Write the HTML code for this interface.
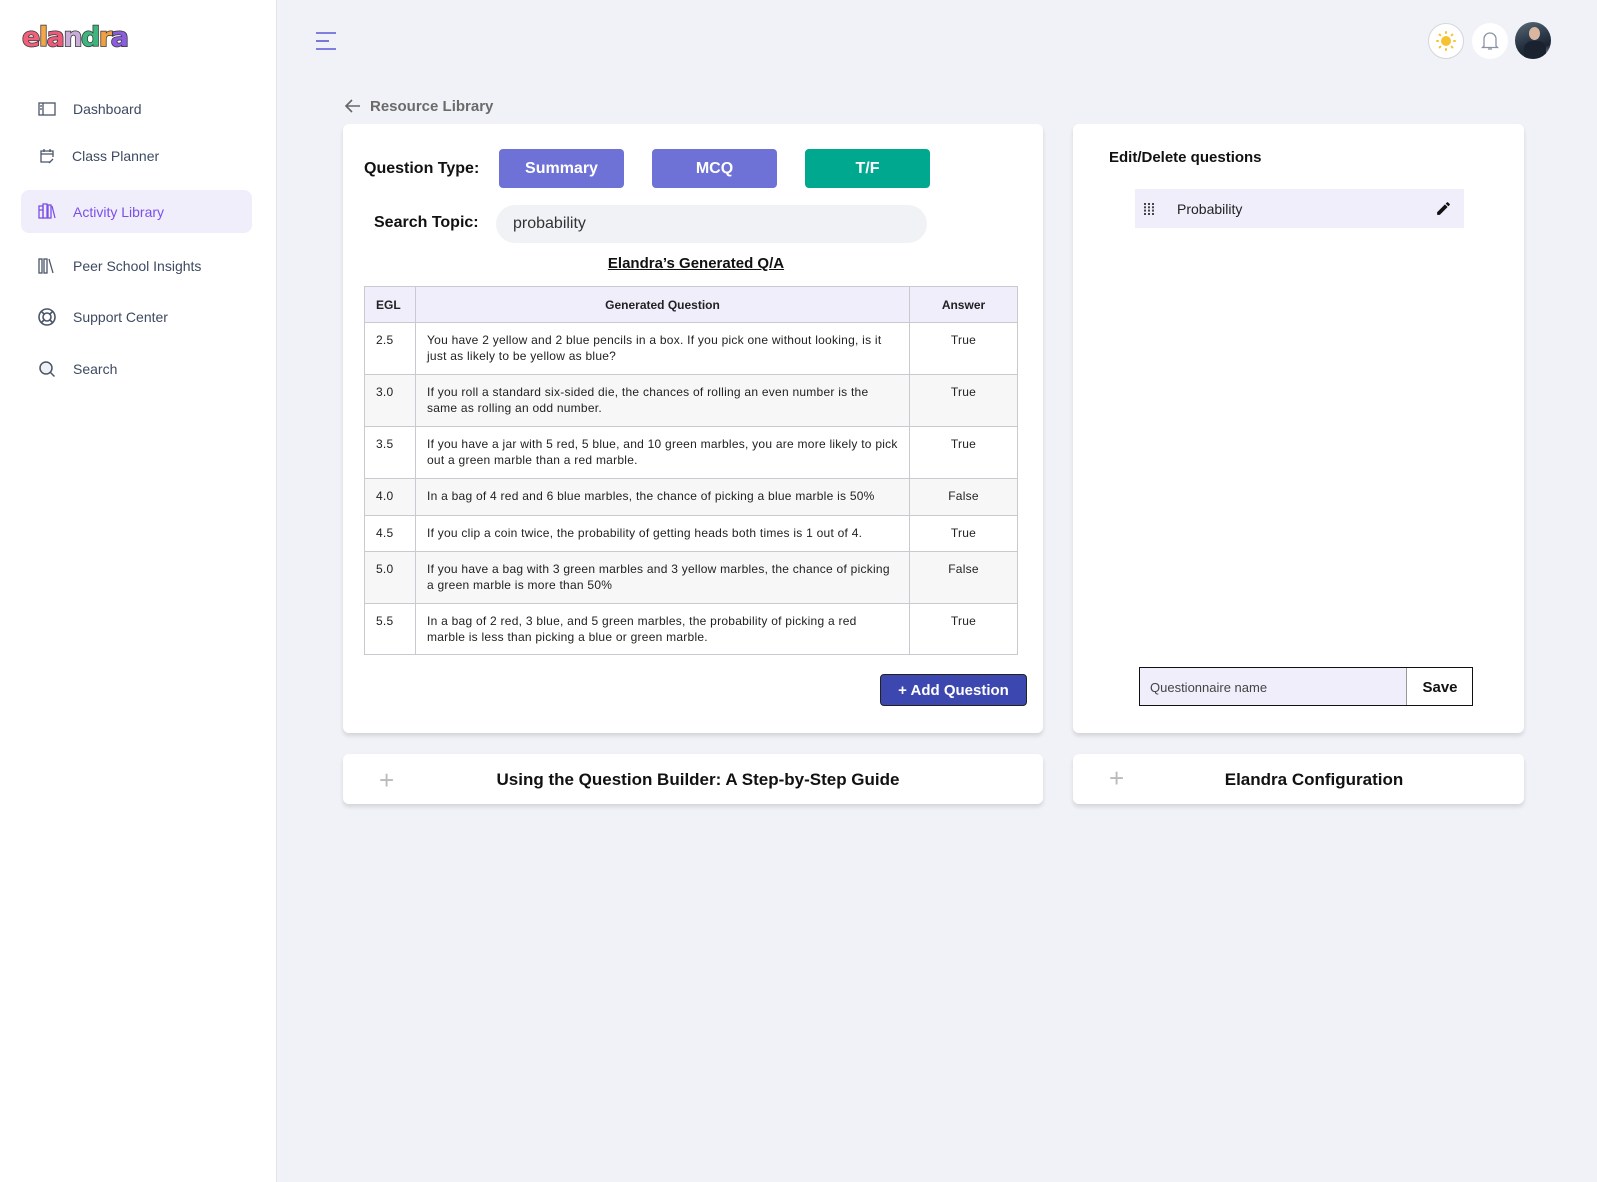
<!DOCTYPE html>
<html><head><meta charset="utf-8"><style>
*{box-sizing:border-box;margin:0;padding:0}
body{width:1597px;height:1182px;background:#f0f2f7;font-family:"Liberation Sans",sans-serif;position:relative;overflow:hidden;color:#111}
.a{position:absolute}
.side{left:0;top:0;width:277px;height:1182px;background:#fff;border-right:1px solid #e3e5ea}
.logo{left:22px;top:22px;font-size:27px;font-weight:bold;font-family:"DejaVu Sans","Liberation Sans",sans-serif;letter-spacing:-1.5px;paint-order:stroke fill;-webkit-text-stroke:1.5px #333}
.nav{left:73px;font-size:14px;color:#3d4a60;line-height:16px}
.ic{left:37px;width:20px;height:20px}
.card{background:#fff;border-radius:6px;box-shadow:0 3px 4px rgba(0,0,0,.12)}
.btn{height:39px;border-radius:4px;color:#fff;font-weight:bold;font-size:16px;display:flex;align-items:center;justify-content:center}
table{border-collapse:collapse;font-size:12px;color:#222;letter-spacing:.25px}
td,th{border:1px solid #c9c9cf;vertical-align:top;padding:9px 11px;line-height:16px}
th{background:#f1eefc;font-weight:bold;vertical-align:middle;padding:0 11px;letter-spacing:0}
tr.g td{background:#f7f7f8}
.c{text-align:center}
</style></head><body>
<div class="a side"></div>
<div class="a logo"><span style="color:#f0607a">e</span><span style="color:#f3a64a">l</span><span style="color:#ec5a7a">a</span><span style="color:#c9acd8">n</span><span style="color:#3fb47e">d</span><span style="color:#f0a040">r</span><span style="color:#8a5ce0">a</span></div>

<svg class="a ic" style="top:99px" viewBox="0 0 20 20" fill="none" stroke="#4a5568" stroke-width="1.3"><rect x="2" y="4" width="16" height="12"/><line x1="6" y1="4" x2="6" y2="16"/><line x1="3" y1="7" x2="5" y2="7"/><line x1="3" y1="10" x2="5" y2="10"/></svg>
<div class="a nav" style="top:101px">Dashboard</div>
<svg class="a ic" style="top:146px" viewBox="0 0 20 20" fill="none" stroke="#4a5568" stroke-width="1.3"><path d="M13 16H4V5h12v6M4 8h12M7 3v3M13 3v3M12 17l4-4"/></svg>
<div class="a nav" style="top:148px;left:72px">Class Planner</div>
<div class="a" style="left:21px;top:190px;width:231px;height:43px;background:#f1eefc;border-radius:8px"></div>
<svg class="a ic" style="top:202px" viewBox="0 0 20 20" fill="none" stroke="#7b4fe8" stroke-width="1.3"><rect x="2" y="4" width="4" height="12"/><rect x="6" y="2" width="4" height="14"/><rect x="11" y="3" width="3" height="13"/><path d="M15 4l3 12"/><line x1="2" y1="8" x2="6" y2="8"/></svg>
<div class="a nav" style="top:204px;color:#7b4fe8">Activity Library</div>
<svg class="a ic" style="top:256px" viewBox="0 0 20 20" fill="none" stroke="#4a5568" stroke-width="1.3"><rect x="2" y="3" width="3" height="14"/><rect x="7" y="3" width="3" height="14"/><path d="M12 3l4 14"/></svg>
<div class="a nav" style="top:258px">Peer School Insights</div>
<svg class="a ic" style="top:307px" viewBox="0 0 20 20" fill="none" stroke="#4a5568" stroke-width="1.6"><circle cx="10" cy="10" r="8"/><circle cx="10" cy="10" r="4"/><path d="M4 4l3 3M16 4l-3 3M4 16l3-3M16 16l-3-3"/></svg>
<div class="a nav" style="top:309px">Support Center</div>
<svg class="a ic" style="top:359px" viewBox="0 0 20 20" fill="none" stroke="#4a5568" stroke-width="1.5"><circle cx="9" cy="9" r="6" fill="#eef0f4"/><path d="M13.5 13.5l4 4"/></svg>
<div class="a nav" style="top:361px">Search</div>

<svg class="a" style="left:315px;top:31px" width="22" height="20" viewBox="0 0 22 20" stroke="#5a58d6" stroke-width="1.6"><line x1="1" y1="2" x2="21" y2="2"/><line x1="1" y1="10" x2="14" y2="10"/><line x1="1" y1="18" x2="21" y2="18"/></svg>

<div class="a" style="left:1428px;top:23px;width:36px;height:36px;border-radius:50%;background:#fff;border:1px solid #d4d6dc"></div>
<svg class="a" style="left:1434px;top:29px" width="24" height="24" viewBox="0 0 24 24" fill="#f7c232"><circle cx="12" cy="12" r="5"/><g stroke="#f7c232" stroke-width="2" stroke-linecap="round"><path d="M12 3v1M12 20v1M3 12h1M20 12h1M5.6 5.6l.7.7M17.7 17.7l.7.7M5.6 18.4l.7-.7M17.7 6.3l.7-.7"/></g></svg>
<div class="a" style="left:1472px;top:23px;width:36px;height:36px;border-radius:50%;background:#fff"></div>
<svg class="a" style="left:1481px;top:31px" width="18" height="20" viewBox="0 0 18 20" fill="none" stroke="#8a93a6" stroke-width="1.3"><path d="M3 15V8a6 6 0 0112 0v7l1.5 1.5h-15zM7 18h4"/></svg>
<div class="a" style="left:1515px;top:22px;width:36px;height:37px;border-radius:50%;background:linear-gradient(160deg,#5d6a77 0%,#2c3a4a 45%,#1b2430 70%,#b9c2cc 100%);overflow:hidden"><div style="position:absolute;left:14px;top:5px;width:11px;height:13px;border-radius:50%;background:#d9b6a0"></div><div style="position:absolute;left:9px;top:19px;width:22px;height:20px;border-radius:8px 8px 0 0;background:#1a2230"></div></div>

<svg class="a" style="left:344px;top:98px" width="18" height="16" viewBox="0 0 18 16" fill="none" stroke="#666" stroke-width="1.6"><path d="M16 8H2M8 2L2 8l6 6"/></svg>
<div class="a" style="left:370px;top:98px;font-size:15px;font-weight:bold;color:#6b6b6b">Resource Library</div>

<div class="a card" style="left:343px;top:124px;width:700px;height:609px"></div>
<div class="a" style="left:364px;top:160px;font-size:16px;font-weight:bold">Question Type:</div>
<div class="a btn" style="left:499px;top:149px;width:125px;background:#6e72d6">Summary</div>
<div class="a btn" style="left:652px;top:149px;width:125px;background:#6e72d6">MCQ</div>
<div class="a btn" style="left:805px;top:149px;width:125px;background:#00a890">T/F</div>
<div class="a" style="left:374px;top:214px;font-size:16px;font-weight:bold">Search Topic:</div>
<div class="a" style="left:496px;top:205px;width:431px;height:38px;border-radius:19px;background:#f0f2f6;font-size:16px;color:#333;padding:10px 17px">probability</div>
<div class="a" style="left:364px;top:255px;width:664px;text-align:center;font-size:15px;font-weight:bold;text-decoration:underline">Elandra’s Generated Q/A</div>

<table class="a" style="left:364px;top:286px;width:654px">
<tr style="height:36px"><th style="width:51px;text-align:left">EGL</th><th>Generated Question</th><th style="width:108px">Answer</th></tr>
<tr style="height:52px"><td>2.5</td><td>You have 2 yellow and 2 blue pencils in a box. If you pick one without looking, is it just as likely to be yellow as blue?</td><td class="c">True</td></tr>
<tr class="g" style="height:52px"><td>3.0</td><td>If you roll a standard six-sided die, the chances of rolling an even number is the same as rolling an odd number.</td><td class="c">True</td></tr>
<tr style="height:52px"><td>3.5</td><td>If you have a jar with 5 red, 5 blue, and 10 green marbles, you are more likely to pick out a green marble than a red marble.</td><td class="c">True</td></tr>
<tr class="g" style="height:37px"><td>4.0</td><td>In a bag of 4 red and 6 blue marbles, the chance of picking a blue marble is 50%</td><td class="c">False</td></tr>
<tr style="height:36px"><td>4.5</td><td>If you clip a coin twice, the probability of getting heads both times is 1 out of 4.</td><td class="c">True</td></tr>
<tr class="g" style="height:52px"><td>5.0</td><td>If you have a bag with 3 green marbles and 3 yellow marbles, the chance of picking a green marble is more than 50%</td><td class="c">False</td></tr>
<tr style="height:51px"><td>5.5</td><td>In a bag of 2 red, 3 blue, and 5 green marbles, the probability of picking a red marble is less than picking a blue or green marble.</td><td class="c">True</td></tr>
</table>
<div class="a btn" style="left:880px;top:674px;width:147px;height:32px;background:#3d47b0;border:1px solid #222;font-size:15px">+ Add Question</div>

<div class="a card" style="left:1073px;top:124px;width:451px;height:609px"></div>
<div class="a" style="left:1109px;top:149px;font-size:15px;font-weight:bold">Edit/Delete questions</div>
<div class="a" style="left:1135px;top:189px;width:329px;height:39px;background:#f1eefc"></div>
<svg class="a" style="left:1144px;top:203px" width="10" height="12" viewBox="0 0 10 12" fill="#444"><g><rect x="0" y="0" width="2" height="2"/><rect x="4" y="0" width="2" height="2"/><rect x="8" y="0" width="2" height="2"/><rect x="0" y="3.3" width="2" height="2"/><rect x="4" y="3.3" width="2" height="2"/><rect x="8" y="3.3" width="2" height="2"/><rect x="0" y="6.6" width="2" height="2"/><rect x="4" y="6.6" width="2" height="2"/><rect x="8" y="6.6" width="2" height="2"/><rect x="0" y="10" width="2" height="2"/><rect x="4" y="10" width="2" height="2"/><rect x="8" y="10" width="2" height="2"/></g></svg>
<div class="a" style="left:1177px;top:201px;font-size:14px;color:#222">Probability</div>
<svg class="a" style="left:1435px;top:200px" width="17" height="17" viewBox="0 0 24 24" fill="#111"><path d="M3 17.25V21h3.75L17.8 9.94l-3.75-3.75zM20.7 7.04a1 1 0 000-1.41l-2.34-2.34a1 1 0 00-1.41 0l-1.83 1.83 3.75 3.75z"/></svg>
<div class="a" style="left:1139px;top:667px;width:334px;height:39px;border:1.5px solid #111;background:#fff"></div>
<div class="a" style="left:1140px;top:668px;width:267px;height:37px;background:#f1eefc;border-right:1px solid #999;font-size:13px;color:#444;padding:12px 10px">Questionnaire name</div>
<div class="a" style="left:1407px;top:679px;width:66px;text-align:center;font-size:15px;font-weight:bold">Save</div>

<div class="a card" style="left:343px;top:754px;width:700px;height:50px"></div>
<div class="a" style="left:379px;top:770px;font-size:26px;color:#bbb;line-height:20px;font-weight:300">+</div>
<div class="a" style="left:343px;top:770px;width:710px;text-align:center;font-size:17px;font-weight:bold">Using the Question Builder: A Step-by-Step Guide</div>
<div class="a card" style="left:1073px;top:754px;width:451px;height:50px"></div>
<div class="a" style="left:1109px;top:768px;font-size:26px;color:#bbb;line-height:20px;font-weight:300">+</div>
<div class="a" style="left:1169px;top:770px;width:290px;text-align:center;font-size:17px;font-weight:bold">Elandra Configuration</div>
</body></html>
